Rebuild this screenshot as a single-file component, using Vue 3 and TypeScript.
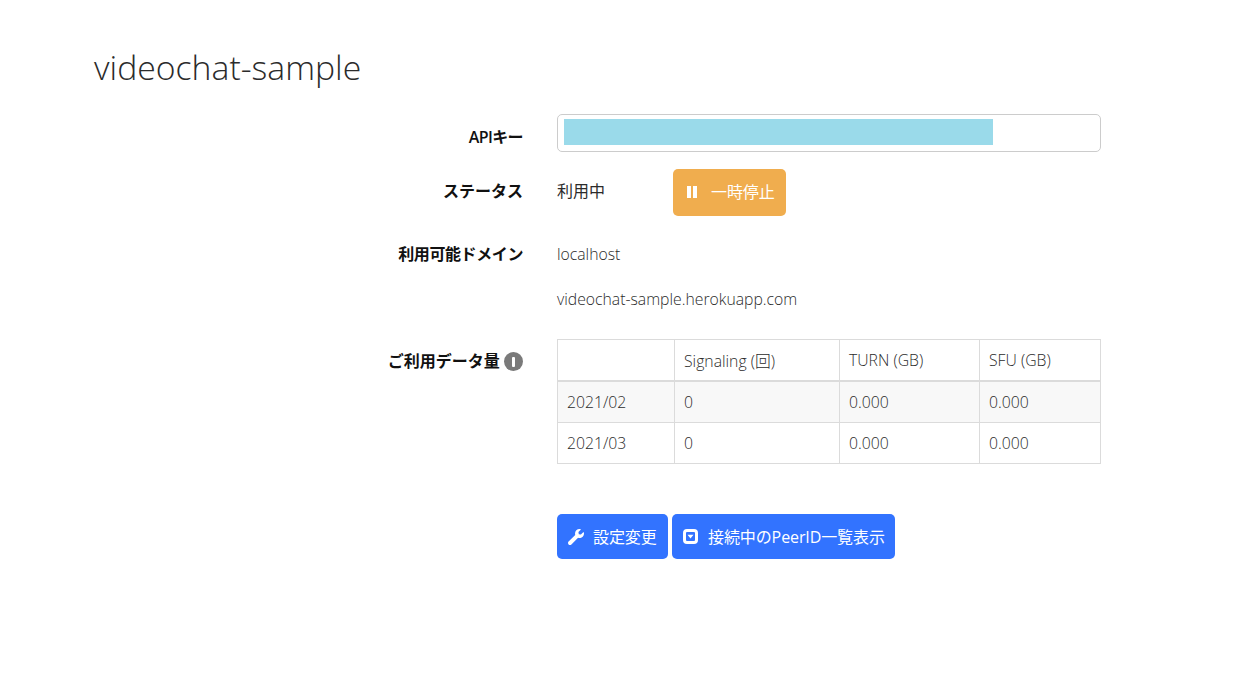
<script setup lang="ts">
interface Row { month: string; signaling: string; turn: string; sfu: string }
const rows: Row[] = [
  { month: '2021/02', signaling: '0', turn: '0.000', sfu: '0.000' },
  { month: '2021/03', signaling: '0', turn: '0.000', sfu: '0.000' },
]
</script>

<template>
  <main class="page">
    <h1 class="title">videochat-sample</h1>
    <section class="form">
      <div class="field key-field">
        <div class="label">APIキー</div>
        <div class="control">
          <div class="key-box"><span class="key-mask"></span></div>
        </div>
      </div>
      <div class="field status-field">
        <div class="label status-label">ステータス</div>
        <div class="control status-control">
          <span class="status-text">利用中</span>
          <button class="btn warning" type="button">
            <svg class="pause" viewBox="0 0 10 12" width="10" height="12"><path d="M0 0h4v12H0zM6 0h4v12H6z" fill="#fff" /></svg>
            <span>一時停止</span>
          </button>
        </div>
      </div>
      <div class="field domain-field">
        <div class="label domain-label">利用可能ドメイン</div>
        <div class="control domains">
          <p>localhost</p>
          <p>videochat-sample.herokuapp.com</p>
        </div>
      </div>
      <div class="field usage-field">
        <div class="label usage-label">
          ご利用データ量
          <span class="info"><i></i></span>
        </div>
        <div class="control">
          <table class="usage">
            <colgroup>
              <col class="c1" /><col class="c2" /><col class="c3" /><col class="c4" />
            </colgroup>
            <thead>
              <tr><th></th><th>Signaling (回)</th><th>TURN (GB)</th><th>SFU (GB)</th></tr>
            </thead>
            <tbody>
              <tr v-for="r in rows" :key="r.month">
                <td>{{ r.month }}</td><td>{{ r.signaling }}</td><td>{{ r.turn }}</td><td>{{ r.sfu }}</td>
              </tr>
            </tbody>
          </table>
        </div>
      </div>
      <div class="field action-field">
        <div class="label"></div>
        <div class="control actions">
          <button class="btn primary first" type="button">
            <svg viewBox="0 0 512 512" width="16" height="16"><path fill="#fff" d="M507.7 109.100c-2.200-9-13.500-12.100-20.100-5.500l-74.400 74.400-67.900-11.300-11.300-67.900 74.400-74.400c6.600-6.600 3.400-17.900-5.700-20.200-47.400-11.700-99.500.9-136.400 37.800-39.500 39.500-50.500 97.100-34.100 147.200L18.700 402.800c-25 25-25 65.500 0 90.500 25 25 65.500 25 90.500 0l213.200-213.200c50.100 16.700 107.500 5.700 147.400-34.200 37-37 49.600-89.200 37.900-136.800z" /></svg>
            <span>設定変更</span>
          </button>
          <button class="btn primary second" type="button">
            <svg viewBox="0 0 15 15" width="15" height="15"><path fill="#fff" fill-rule="evenodd" d="M4 0h7a4 4 0 0 1 4 4v7a4 4 0 0 1-4 4H4a4 4 0 0 1-4-4V4a4 4 0 0 1 4-4zM4 3a1 1 0 0 0-1 1v7a1 1 0 0 0 1 1h7a1 1 0 0 0 1-1V4a1 1 0 0 0-1-1zM4.500 5.700h6L7.500 9.500z" /></svg>
            <span>接続中のPeerID一覧表示</span>
          </button>
        </div>
      </div>
    </section>
  </main>
</template>

<style scoped>
.page {
  padding: 42px 151px 0 94px;
  font-family: "Open Sans", "Noto Sans CJK JP", sans-serif;
  font-size: 15.75px;
  font-weight: 300;
  color: #2b2b2b;
}
.title {
  margin: 0 0 22px;
  font-size: 33.75px;
  line-height: 50px;
  font-weight: 300;
}
.field {
  display: grid;
  grid-template-columns: 429px 544px;
  column-gap: 34px;
}
.label {
  text-align: right;
  font-size: 16px;
  font-weight: 700;
  color: #111;
  line-height: 22px;
}
.key-field { margin-bottom: 17px; }
.key-field .label { padding-top: 12px; letter-spacing: -0.6px; font-weight: 600; }
.key-box {
  height: 38px;
  box-sizing: border-box;
  border: 1px solid #ccc;
  border-radius: 5px;
  padding: 4px 6px;
}
.key-mask {
  display: block;
  width: 429px;
  height: 26px;
  background: #9adaea;
}
.status-field { margin-bottom: 15px; }
.status-label { padding-top: 11px; }
.status-control {
  display: flex;
  align-items: flex-start;
}
.status-text {
  width: 116px;
  line-height: 44px;
  font-size: 16px;
  font-weight: 400;
}
.btn {
  display: inline-flex;
  align-items: center;
  border: 0;
  border-radius: 5px;
  color: #fff;
  font: inherit;
  font-size: 16px;
  font-weight: 400;
  padding: 0;
}
.warning {
  width: 113px;
  height: 47px;
  background: #f0ad4e;
  padding-left: 14px;
  padding-bottom: 3px;
  gap: 14px;
}
.warning span { letter-spacing: -0.1px; }
.pause { margin-top: 1px; }
.domain-label { padding-top: 12px; letter-spacing: -0.4px; }
.domains p {
  margin: 0 0 23px;
  line-height: 22px;
}
.domains { padding-top: 12px; }
.domain-field { margin-bottom: 6px; }
.usage-label { padding-top: 11px; display: block; }
.info {
  display: inline-block;
  vertical-align: -4px;
  position: relative;
  width: 19px;
  height: 19px;
  border-radius: 50%;
  background: #7a7a7a;
}
.info i {
  position: absolute;
  left: 8px;
  top: 5px;
  width: 3px;
  height: 10px;
  border-radius: 1px;
  background: #fff;
}
.usage {
  width: 544px;
  table-layout: fixed;
  border-collapse: collapse;
}
.c1 { width: 117px; }
.c2 { width: 165px; }
.c3 { width: 140px; }
.usage th, .usage td {
  border: 1px solid #dbdbdb;
  padding: 0 9px;
  text-align: left;
  font-weight: 300;
  height: 41px;
  box-sizing: border-box;
}
.usage thead th { border-bottom-width: 2px; height: 41px; padding-top: 1px; }
.usage tbody tr:first-child td { height: 42px; }
.usage tbody tr:first-child { background: #f8f8f8; }
.action-field { margin-top: 50px; }
.actions {
  display: flex;
  gap: 4px;
}
.primary {
  height: 45px;
  background: #3273ff;
  padding-bottom: 2px;
}
.primary span { letter-spacing: -0.1px; }
.primary svg { margin-top: 2px; }
.first { width: 111px; padding-left: 11px; gap: 9px; }
.second { width: 223px; padding-left: 11px; gap: 10px; }
</style>
